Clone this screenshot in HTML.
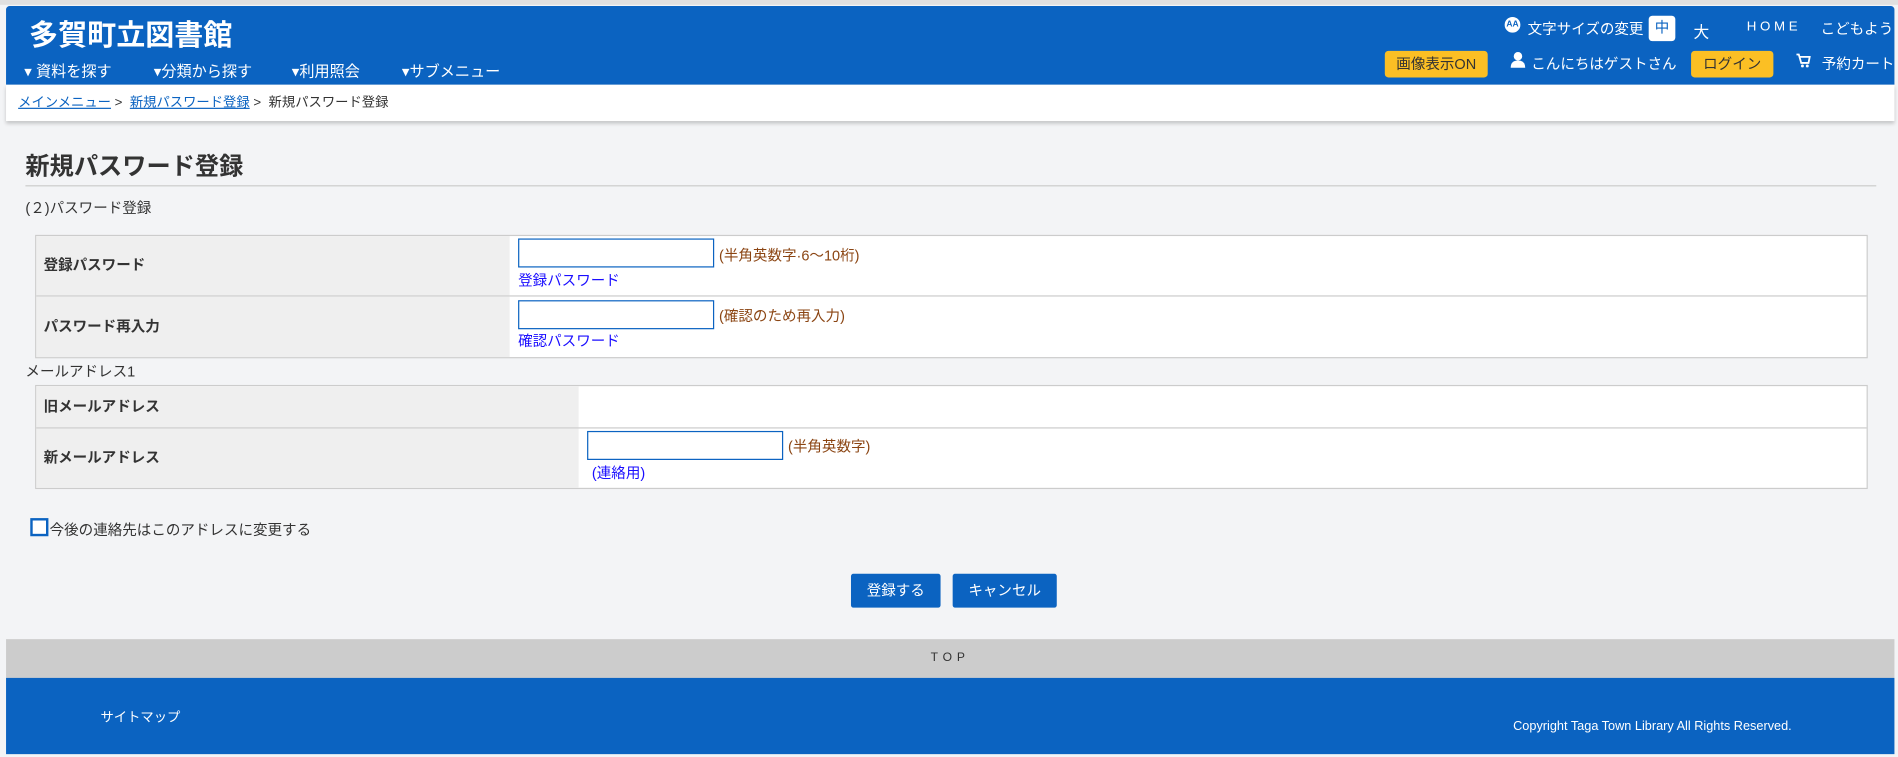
<!DOCTYPE html>
<html><head><meta charset="utf-8">
<style>
html,body{margin:0;padding:0;width:1898px;height:756px;overflow:hidden;background:#f3f4f6;}
#w{position:absolute;left:0;top:0;width:1568px;height:625px;transform:scale(1.2105);transform-origin:0 0;font-family:"Liberation Sans","Noto Sans CJK JP",sans-serif;color:#333;}
.a{position:absolute;white-space:nowrap;}
.hdr{left:5px;top:5px;width:1560px;height:65px;background:#0b63c1;border-radius:3px 3px 0 0;}
.w{color:#fff;}
.ybtn{background:#fbbf24;border-radius:3px;color:#333;font-size:12px;text-align:center;line-height:22px;height:22px;}
.lab{background:#efefef;font-weight:bold;font-size:12px;color:#333;padding-left:6px;}
.inp{position:absolute;width:160px;height:22px;border:1px solid #0b63c1;background:#fff;}
.hint{color:#8b4513;font-size:12px;}
.lk{color:#1a0dff;font-size:12px;}
.btn{background:#0b63c1;color:#fff;font-size:12px;text-align:center;line-height:28px;height:28px;border-radius:2px;}
</style></head><body><div id="w">
<div class="a" style="left:0;top:0;width:1568px;height:4px;background:#e0e0e0"></div>
<div class="a hdr"></div>
<div class="a w" style="left:24px;top:9px;font-size:24px;font-weight:bold;">多賀町立図書館</div>
<div class="a w" style="left:20px;top:48px;font-size:12.5px;">▾ 資料を探す</div>
<div class="a w" style="left:127px;top:48px;font-size:12.5px;">▾分類から探す</div>
<div class="a w" style="left:241px;top:48px;font-size:12.5px;">▾利用照会</div>
<div class="a w" style="left:332px;top:48px;font-size:12.5px;">▾サブメニュー</div>
<div class="a" style="left:1243px;top:14px;width:13px;height:13px;border-radius:50%;background:#fff;color:#0b63c1;font-size:7px;line-height:13px;text-align:center;font-weight:bold">AA</div>
<div class="a w" style="left:1262px;top:15px;font-size:12px;">文字サイズの変更</div>
<div class="a" style="left:1362px;top:13px;width:22px;height:21px;background:#fff;border-radius:3px;color:#0b63c1;font-size:12px;line-height:21px;text-align:center">中</div>
<div class="a w" style="left:1399px;top:16px;font-size:13px;">大</div>
<div class="a w" style="left:1443px;top:16px;font-size:11px;letter-spacing:3px;">HOME</div>
<div class="a w" style="left:1504px;top:15px;font-size:12px;">こどもよう</div>
<div class="a ybtn" style="left:1144px;top:42px;width:85px;">画像表示ON</div>
<div class="a" style="left:1247px;top:42px;width:14px;height:15px;"><svg width="14" height="15"><circle cx="7" cy="4.5" r="3.5" fill="#fff"/><path d="M1 14 Q1 8 7 8 Q13 8 13 14Z" fill="#fff"/></svg></div>
<div class="a w" style="left:1265px;top:44px;font-size:12px;">こんにちはゲストさん</div>
<div class="a ybtn" style="left:1397px;top:42px;width:68px;">ログイン</div>
<div class="a" style="left:1484px;top:43px;"><svg width="12" height="12"><path d="M0 1h2l2 7h6l1-5H3" stroke="#fff" stroke-width="1.5" fill="none"/><circle cx="5" cy="10.5" r="1.2" fill="#fff"/><circle cx="9" cy="10.5" r="1.2" fill="#fff"/></svg></div>
<div class="a w" style="left:1505px;top:44px;font-size:12px;">予約カート</div>
<div class="a" style="left:5px;top:70px;width:1560px;height:30px;background:#fff;box-shadow:0 2px 3px rgba(0,0,0,.2)"></div>
<div class="a" style="left:15px;top:76px;font-size:11px;"><span style="color:#0b63c1;text-decoration:underline">メインメニュー</span> &gt;&nbsp; <span style="color:#0b63c1;text-decoration:underline">新規パスワード登録</span> &gt;&nbsp; 新規パスワード登録</div>
<div class="a" style="left:21px;top:121px;font-size:20px;font-weight:bold;color:#333">新規パスワード登録</div>
<div class="a" style="left:21px;top:153px;width:1529px;height:1px;background:#ccc"></div>
<div class="a" style="left:21px;top:163px;font-size:12px;">(２)パスワード登録</div>
<div class="a" style="left:29px;top:194px;width:1512px;height:100px;border:1px solid #ccc;background:#fff"></div>
<div class="a lab" style="left:30px;top:195px;width:385px;height:49px;line-height:49px">登録パスワード</div>
<div class="a" style="left:30px;top:244px;width:1512px;height:1px;background:#ccc"></div>
<div class="a lab" style="left:30px;top:245px;width:385px;height:50px;line-height:50px">パスワード再入力</div>
<div class="inp" style="left:428px;top:197px"></div>
<div class="a hint" style="left:594px;top:202px">(半角英数字·6～10桁)</div>
<div class="a lk" style="left:428px;top:223px">登録パスワード</div>
<div class="inp" style="left:428px;top:248px"></div>
<div class="a hint" style="left:594px;top:252px">(確認のため再入力)</div>
<div class="a lk" style="left:428px;top:273px">確認パスワード</div>
<div class="a" style="left:21px;top:298px;font-size:12px;">メールアドレス1</div>
<div class="a" style="left:29px;top:318px;width:1512px;height:84px;border:1px solid #ccc;background:#fff"></div>
<div class="a lab" style="left:30px;top:319px;width:442px;height:34px;line-height:34px">旧メールアドレス</div>
<div class="a" style="left:30px;top:353px;width:1512px;height:1px;background:#ccc"></div>
<div class="a lab" style="left:30px;top:354px;width:442px;height:49px;line-height:49px">新メールアドレス</div>
<div class="inp" style="left:485px;top:356px"></div>
<div class="a hint" style="left:651px;top:360px">(半角英数字)</div>
<div class="a lk" style="left:489px;top:382px">(連絡用)</div>
<div class="a" style="left:25px;top:428px;width:11px;height:11px;border:2px solid #0b63c1;background:#fff"></div>
<div class="a" style="left:41px;top:429px;font-size:12px;">今後の連絡先はこのアドレスに変更する</div>
<div class="a btn" style="left:703px;top:474px;width:74px;">登録する</div>
<div class="a btn" style="left:787px;top:474px;width:86px;">キャンセル</div>
<div class="a" style="left:5px;top:528px;width:1560px;height:32px;background:#cccccc;text-align:center;line-height:32px;font-size:10px;letter-spacing:4px;color:#333">TOP</div>
<div class="a" style="left:5px;top:560px;width:1560px;height:63px;background:#0b63c1"></div>
<div class="a w" style="left:83px;top:584px;font-size:11px;">サイトマップ</div>
<div class="a w" style="left:1250px;top:594px;font-size:10.5px;">Copyright Taga Town Library All Rights Reserved.</div>
</div></body></html>
